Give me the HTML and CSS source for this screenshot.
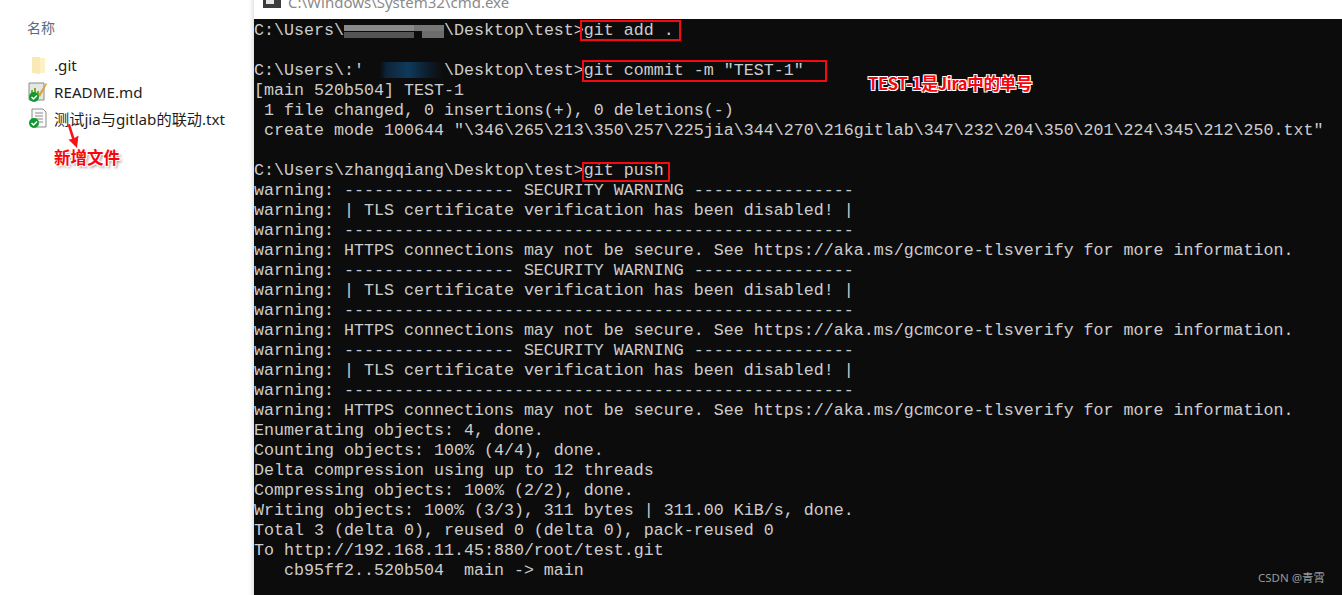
FILE: index.html
```html
<!DOCTYPE html>
<html lang="zh">
<head>
<meta charset="utf-8">
<title>git push</title>
<link rel="stylesheet" href="styles.css">
</head>
<body>
<div class="page">
  <aside class="explorer">
    <div class="col-head">名称</div>
    <ul class="files">
      <li class="file">
        <svg class="ico" viewBox="0 0 20 20"><path d="M4 2h8v17l-8-1z" fill="#f9e9b6"/><path d="M12 3h5v15h-5z" fill="#fdf0c4"/></svg>
        <span>.git</span>
      </li>
      <li class="file">
        <svg class="ico" viewBox="0 0 20 20"><path d="M1 1h15v17H1z" fill="#e4e8e2" stroke="#8a8a8a"/><path d="M4 8v7M7 6v9M10 9v6" stroke="#7fa83d" stroke-width="2"/><path d="M10 13 18 1l1 1-7 13z" fill="#d9a441"/><circle cx="6" cy="15" r="5" fill="#0e9a2d"/><path d="M3.5 15l2 2 3.500-3.500" stroke="#fff" stroke-width="1.500" fill="none"/></svg>
        <span>README.md</span>
      </li>
      <li class="file">
        <svg class="ico" viewBox="0 0 20 20"><path d="M4 1h11l3 3v15H4z" fill="#fafafa" stroke="#8c8c8c"/><path d="M7 5h8M7 8h8M7 11h8M10 14h5" stroke="#8c8c8c"/><circle cx="6" cy="15" r="5" fill="#0e9a2d"/><path d="M3.500 15l2 2 3.500-3.500" stroke="#fff" stroke-width="1.500" fill="none"/></svg>
        <span>测试jia与gitlab的联动.txt</span>
      </li>
    </ul>
    <svg class="arrow" viewBox="0 0 14 24"><path d="M0.500 0.500 3 0 7.500 14 11.500 11.500 10 24 1.500 15.500 5 15z" fill="#f5141a"/></svg>
    <div class="note note-file">新增文件</div>
  </aside>
  <main class="window">
    <header class="titlebar">
      <svg class="cmd-ico" viewBox="0 0 18 8"><path d="M0 0h18v8H0z" fill="#3c3c3c"/><path d="M3 0h8v4H3z" fill="#e6e6e6"/></svg>
      <span class="title-text">C:\Windows\System32\cmd.exe</span>
    </header>
    <section class="term">
<div class="ln">C:\Users\<span class="blur blur-a"></span>\Desktop\test&gt;git add .</div>
<div class="ln"> </div>
<div class="ln">C:\Users\:'<span class="blur blur-b"></span>\Desktop\test&gt;git commit -m "TEST-1"</div>
<div class="ln">[main 520b504] TEST-1</div>
<div class="ln"> 1 file changed, 0 insertions(+), 0 deletions(-)</div>
<div class="ln"> create mode 100644 "\346\265\213\350\257\225jia\344\270\216gitlab\347\232\204\350\201\224\345\212\250.txt"</div>
<div class="ln"> </div>
<div class="ln">C:\Users\zhangqiang\Desktop\test&gt;git push</div>
<div class="ln">warning: ----------------- SECURITY WARNING ----------------</div>
<div class="ln">warning: | TLS certificate verification has been disabled! |</div>
<div class="ln">warning: ---------------------------------------------------</div>
<div class="ln">warning: HTTPS connections may not be secure. See https://aka.ms/gcmcore-tlsverify for more information.</div>
<div class="ln">warning: ----------------- SECURITY WARNING ----------------</div>
<div class="ln">warning: | TLS certificate verification has been disabled! |</div>
<div class="ln">warning: ---------------------------------------------------</div>
<div class="ln">warning: HTTPS connections may not be secure. See https://aka.ms/gcmcore-tlsverify for more information.</div>
<div class="ln">warning: ----------------- SECURITY WARNING ----------------</div>
<div class="ln">warning: | TLS certificate verification has been disabled! |</div>
<div class="ln">warning: ---------------------------------------------------</div>
<div class="ln">warning: HTTPS connections may not be secure. See https://aka.ms/gcmcore-tlsverify for more information.</div>
<div class="ln">Enumerating objects: 4, done.</div>
<div class="ln">Counting objects: 100% (4/4), done.</div>
<div class="ln">Delta compression using up to 12 threads</div>
<div class="ln">Compressing objects: 100% (2/2), done.</div>
<div class="ln">Writing objects: 100% (3/3), 311 bytes | 311.00 KiB/s, done.</div>
<div class="ln">Total 3 (delta 0), reused 0 (delta 0), pack-reused 0</div>
<div class="ln">To http://192.168.11.45:880/root/test.git</div>
<div class="ln">   cb95ff2..520b504  main -&gt; main</div>
      <div class="mark mark-add"></div>
      <div class="mark mark-commit"></div>
      <div class="mark mark-push"></div>
      <div class="note note-jira">TEST-1是Jira中的单号</div>
      <div class="watermark">CSDN @青霄</div>
    </section>
  </main>
</div>
</body>
</html>
```
FILE: styles.css
```css
* { box-sizing: border-box; }
html, body { margin: 0; height: 100%; overflow: hidden; background: #fff; }
.page { display: flex; width: 1342px; height: 595px; }

.explorer {
  position: relative;
  flex: 0 0 254px;
  padding: 17px 0 0 27px;
  background: #fff;
  box-shadow: inset -5px 0 5px -4px #d4d4d4;
  font-family: "Noto Sans", "Noto Sans CJK SC", sans-serif;
  color: #1e1e1e;
}
.col-head {
  height: 20px;
  font-family: "Noto Sans CJK SC", sans-serif;
  font-size: 14px;
  line-height: 20px;
  color: #5b6b80;
}
.files { list-style: none; margin: 15px 0 0; padding: 0; }
.file {
  display: flex;
  align-items: center;
  gap: 6px;
  height: 26.5px;
  font-size: 15.200px;
  white-space: nowrap;
}
.ico { flex: 0 0 20px; width: 20px; height: 20px; margin-left: 1px; }
.arrow { position: absolute; left: 67px; top: 124px; width: 14px; height: 24px; }

.note {
  position: absolute;
  font-family: "Noto Sans CJK SC", sans-serif;
  font-weight: 700;
  color: #f5060c;
  white-space: nowrap;
}
.note-file {
  left: 54px; top: 146px; font-size: 16.500px; line-height: 22px;
  text-shadow: 1px 1px 0 #fff, -1px -1px 0 #fff, 1px -1px 0 #fff, -1px 1px 0 #fff, 2px 2px 3px #888;
}
.note-jira {
  left: 614px; top: 53px; font-size: 16.500px; line-height: 22px; letter-spacing: -0.3px;
  text-shadow: 1px 1px 0 #fff, -1px -1px 0 #fff, 1px -1px 0 #fff, -1px 1px 0 #fff;
}

.window { flex: 1; display: flex; flex-direction: column; min-width: 0; }
.titlebar {
  flex: 0 0 19px;
  display: flex;
  align-items: flex-start;
  overflow: hidden;
  padding-left: 9px;
  background: #fff;
}
.cmd-ico { width: 18px; height: 8px; flex: none; }
.title-text {
  margin: -8px 0 0 7px;
  font-family: "Noto Sans", sans-serif;
  font-size: 15px;
  line-height: 20px;
  color: #8a8a8a;
}

.term {
  position: relative;
  flex: 1;
  padding-top: 2px;
  overflow: hidden;
  background: #0c0c0c;
  color: #cccccc;
  font-family: "Liberation Mono", "Noto Sans CJK SC", monospace;
  font-size: 16.667px;
}
.ln { height: 20px; line-height: 20px; white-space: pre; }
.blur { display: inline-block; height: 16px; vertical-align: -3px; }
.blur-a {
  width: 10ch;
  background:
    linear-gradient(90deg, transparent 0 78%, #6c6c6c 78% 100%) 0 9px / 100% 7px no-repeat,
    linear-gradient(90deg, #8a8a8a 0 70%, #777 70% 100%) 0 3px / 100% 6px no-repeat,
    linear-gradient(90deg, #555 0 70%, transparent 70%) 0 10px / 100% 6px no-repeat;
}
.blur-b { width: 8ch; background: linear-gradient(90deg, #0c0c0c 0 20%, #0d2438 28%, #0f3a5c 55%, #0c1c2a 80%, #0c0c0c); }

.mark { position: absolute; border: 2px solid #f40a10; }
.mark-add { left: 326px; top: 1px; width: 101px; height: 21px; }
.mark-commit { left: 328px; top: 41px; width: 245px; height: 22px; }
.mark-push { left: 328px; top: 143px; width: 88px; height: 20px; }

.watermark {
  position: absolute;
  right: 17px;
  bottom: 9px;
  font-family: "Noto Sans", "Noto Sans CJK SC", sans-serif;
  font-size: 11.500px;
  line-height: 16px;
  color: #9a9a9a;
}
```
